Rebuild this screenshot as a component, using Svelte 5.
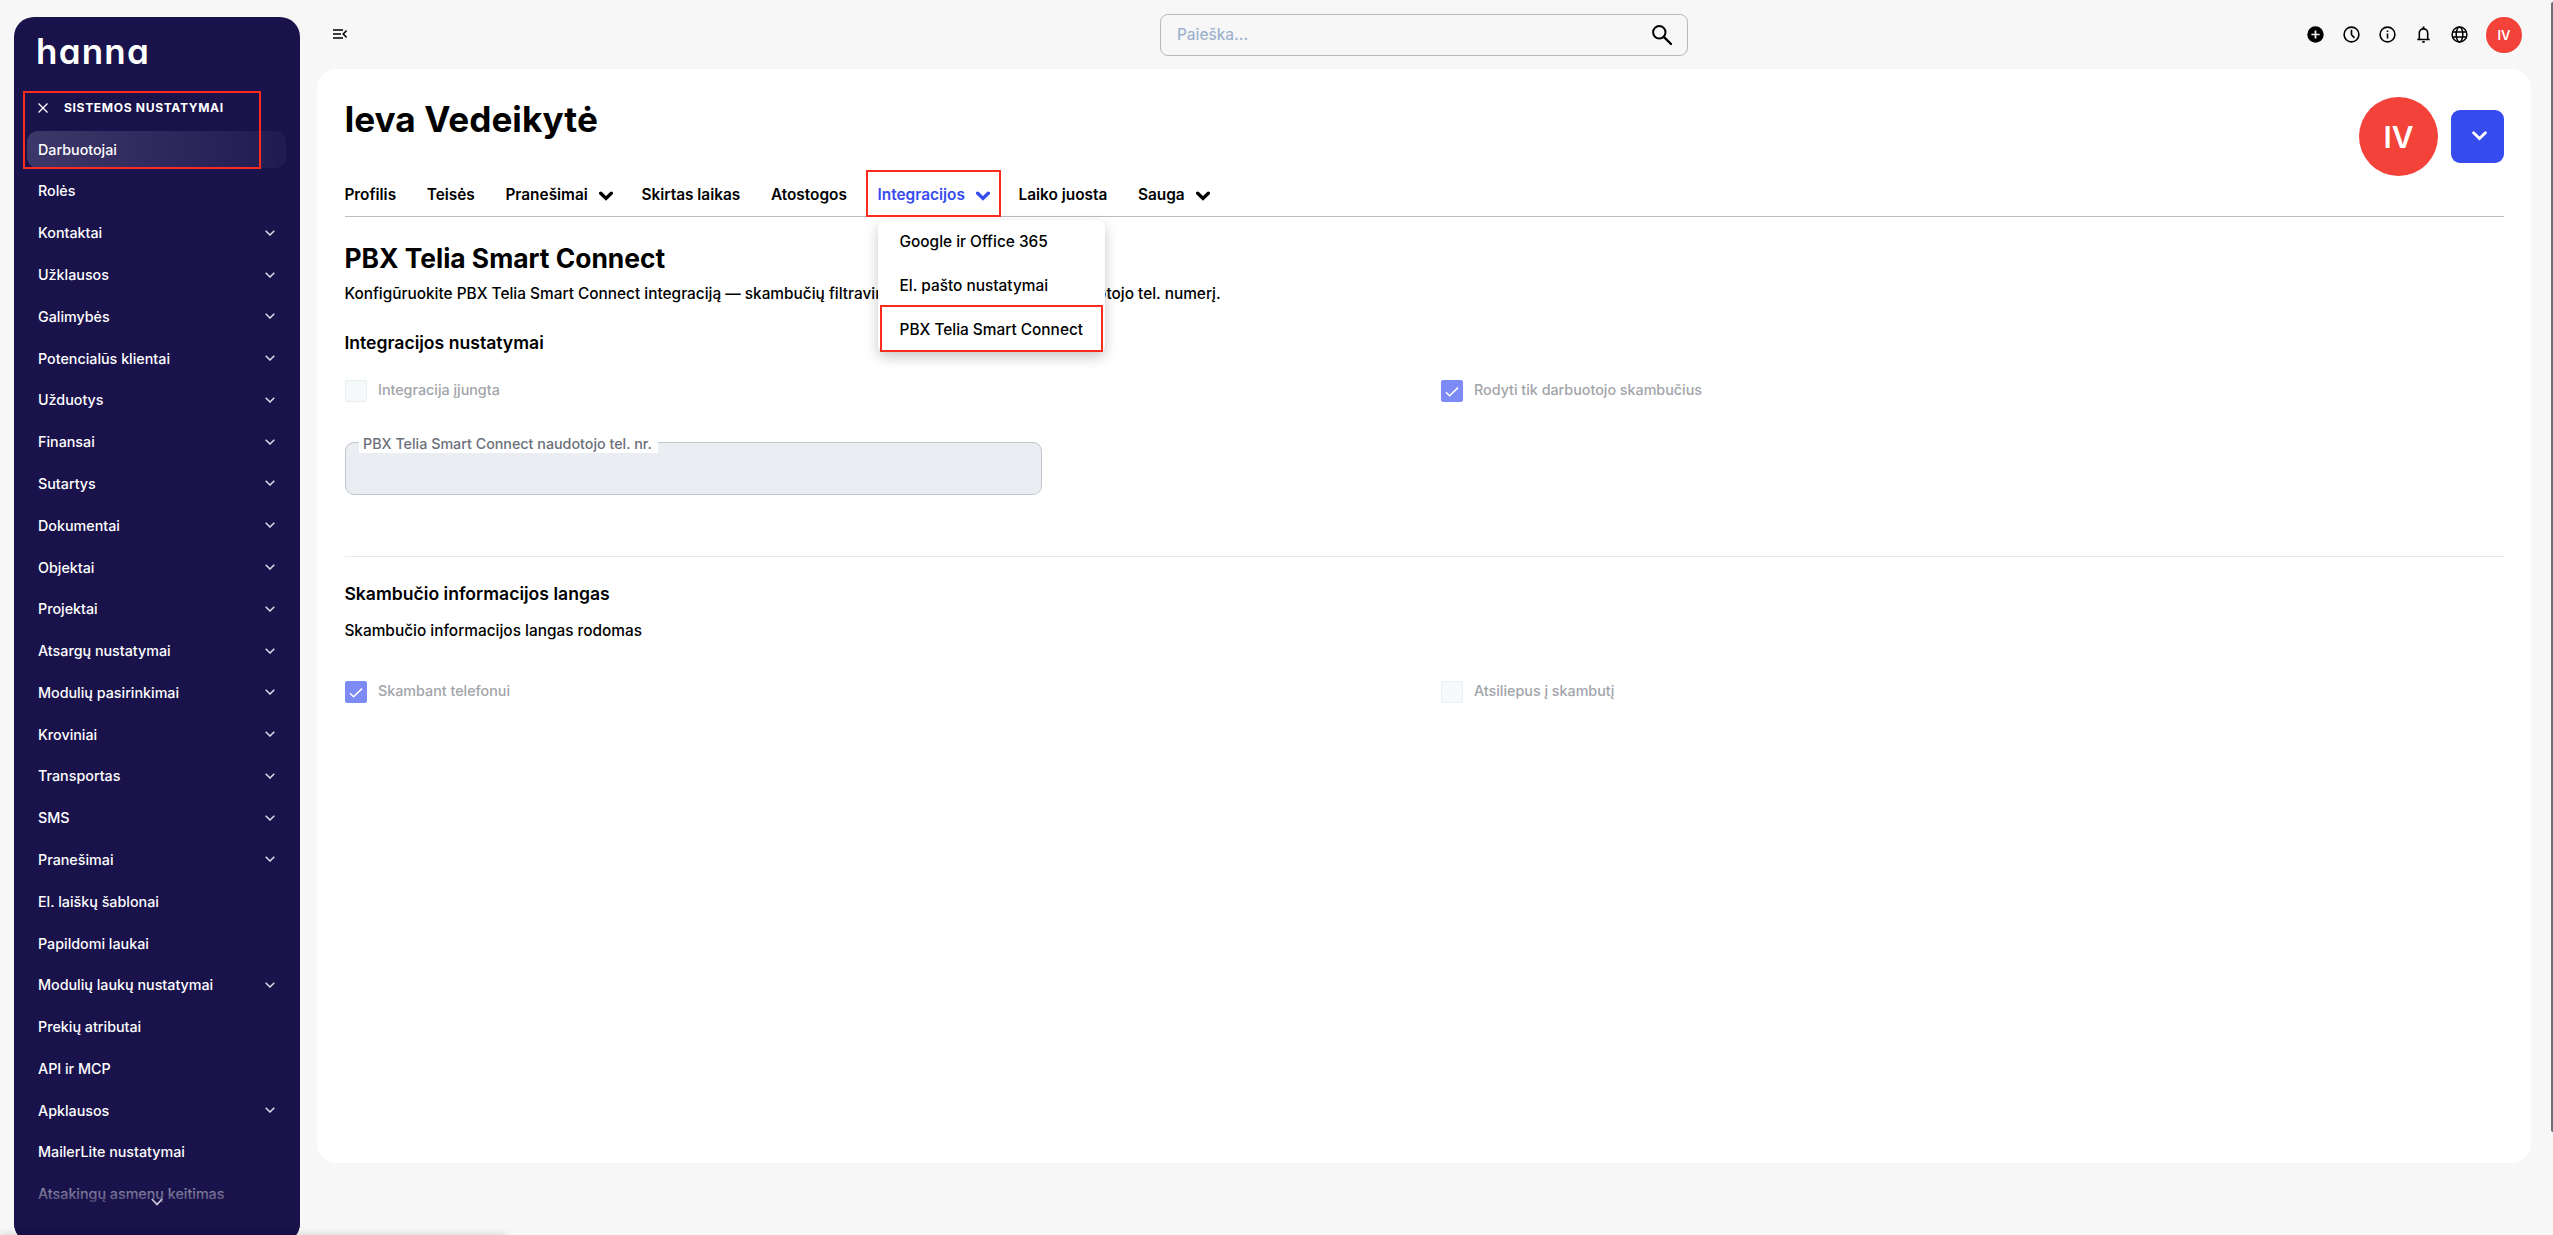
<script>
  const navItems = [
    {label: 'Darbuotojai', active: true},
    {label: 'Rolės'},
    {label: 'Kontaktai', children: true},
    {label: 'Užklausos', children: true},
    {label: 'Galimybės', children: true},
    {label: 'Potencialūs klientai', children: true},
    {label: 'Užduotys', children: true},
    {label: 'Finansai', children: true},
    {label: 'Sutartys', children: true},
    {label: 'Dokumentai', children: true},
    {label: 'Objektai', children: true},
    {label: 'Projektai', children: true},
    {label: 'Atsargų nustatymai', children: true},
    {label: 'Modulių pasirinkimai', children: true},
    {label: 'Kroviniai', children: true},
    {label: 'Transportas', children: true},
    {label: 'SMS', children: true},
    {label: 'Pranešimai', children: true},
    {label: 'El. laiškų šablonai'},
    {label: 'Papildomi laukai'},
    {label: 'Modulių laukų nustatymai', children: true},
    {label: 'Prekių atributai'},
    {label: 'API ir MCP'},
    {label: 'Apklausos', children: true},
    {label: 'MailerLite nustatymai'},
    {label: 'Atsakingų asmenų keitimas'}
  ];

  const tabs = [
    {label: 'Profilis'},
    {label: 'Teisės'},
    {label: 'Pranešimai', children: true},
    {label: 'Skirtas laikas'},
    {label: 'Atostogos'},
    {label: 'Integracijos', children: true, active: true},
    {label: 'Laiko juosta'},
    {label: 'Sauga', children: true}
  ];

  const menuItems = [
    {label: 'Google ir Office 365'},
    {label: 'El. pašto nustatymai'},
    {label: 'PBX Telia Smart Connect', marked: true}
  ];
</script>

{#snippet checkbox(label, checked)}
  <div class="check">
    <span class="box" class:checked>
      {#if checked}
        <svg width="22" height="22" viewBox="0 0 22 22">
          <path d="M5 12.2l3.6 3.6L17 7.6" fill="none" stroke="#fff" stroke-width="1.5" />
        </svg>
      {/if}
    </span>
    <span>{label}</span>
  </div>
{/snippet}

<div class="page">
  <aside>
    <div class="logo">hanna</div>

    <div class="section">
      <svg width="10" height="10" viewBox="0 0 10 10">
        <path d="M.5.5l9 9M9.5.5l-9 9" stroke="#fff" stroke-width="1.3" />
      </svg>
      <span>SISTEMOS NUSTATYMAI</span>
      <div class="marker section-marker"></div>
    </div>

    <nav>
      {#each navItems as item}
        <div class="nav-item" class:active={item.active}>
          <span>{item.label}</span>
          {#if item.children}
            <svg width="10" height="6" viewBox="0 0 10 6">
              <path d="M.7.7L5 5 9.3.7" fill="none" stroke="#dddce8" stroke-width="1.5" />
            </svg>
          {/if}
        </div>
      {/each}
    </nav>

    <div class="fade">
      <svg width="12" height="8" viewBox="0 0 12 8">
        <path d="M.8 1L6 6.4 11.2 1" fill="none" stroke="#c9c7d8" stroke-width="1.7" />
      </svg>
    </div>
  </aside>

  <div class="content">
    <header>
      <svg class="collapse" width="14" height="10" viewBox="0 0 14 10">
        <path d="M0 .9h10M0 5h8M0 9.1h10M13.6 1.6L10.2 5l3.4 3.4" fill="none" stroke="#000" stroke-width="1.5" />
      </svg>

      <div class="search">
        <span>Paieška...</span>
        <svg width="20" height="20" viewBox="0 0 20 20">
          <circle cx="7.3" cy="7.3" r="6.2" fill="none" stroke="#000" stroke-width="2" />
          <path d="M11.8 11.8l7.2 7.2" stroke="#000" stroke-width="2.4" stroke-linecap="round" />
        </svg>
      </div>

      <div class="tools">
        <svg width="17" height="17" viewBox="0 0 17 17">
          <circle cx="8.5" cy="8.5" r="8.2" />
          <path d="M8.5 4.4v8.2M4.4 8.5h8.2" stroke="#f7f7f7" stroke-width="1.7" />
        </svg>
        <svg width="17" height="17" viewBox="0 0 17 17">
          <circle cx="8.5" cy="8.5" r="7.4" fill="none" stroke="#000" stroke-width="1.6" />
          <path d="M8.5 3.8v4.9l3 3.2" fill="none" stroke="#000" stroke-width="1.6" />
        </svg>
        <svg width="17" height="17" viewBox="0 0 17 17">
          <circle cx="8.5" cy="8.5" r="7.4" fill="none" stroke="#000" stroke-width="1.6" />
          <path d="M8.5 7.4v5.2M8.5 4.5v1.6" stroke="#000" stroke-width="1.6" />
        </svg>
        <svg width="17" height="17" viewBox="0 0 17 17">
          <path d="M2.3 13.5h12.4M4.3 13.2V7.1a4.2 4.2 0 0 1 8.4 0v6.1" fill="none" stroke="#000" stroke-width="1.6" />
          <path d="M8.5.6v2.2M7.3 15.8h2.4" stroke="#000" stroke-width="1.8" />
        </svg>
        <svg width="17" height="17" viewBox="0 0 17 17">
          <g fill="none" stroke="#000" stroke-width="1.5">
            <circle cx="8.5" cy="8.5" r="7.4" />
            <ellipse cx="8.5" cy="8.5" rx="3.3" ry="7.4" />
            <path d="M1.4 6h14.2M1.4 11h14.2" />
          </g>
        </svg>
        <div class="avatar small">IV</div>
      </div>
    </header>

    <main>
      <div class="title">
        <h1>Ieva Vedeikytė</h1>
        <div class="avatar">IV</div>
        <button aria-label="Veiksmai">
          <svg width="15" height="10" viewBox="0 0 15 10">
            <path d="M1.6 1.7l5.9 5.8 5.9-5.8" fill="none" stroke="#fff" stroke-width="2.8" stroke-linecap="round" />
          </svg>
        </button>
      </div>

      <div class="tabs">
        {#each tabs as tab}
          <div class="tab" class:active={tab.active}>
            <span>{tab.label}</span>
            {#if tab.children}
              <svg width="14" height="10" viewBox="0 0 14 10">
                <path d="M1.7 2.2L7 7.4l5.3-5.2" fill="none" stroke="currentColor" stroke-width="3.4" stroke-linecap="round" />
              </svg>
            {/if}
            {#if tab.active}
              <div class="menu">
                {#each menuItems as item}
                  <div class="menu-item">
                    {item.label}
                    {#if item.marked}<div class="marker menu-marker"></div>{/if}
                  </div>
                {/each}
              </div>
              <div class="marker tab-marker"></div>
            {/if}
          </div>
        {/each}
      </div>

      <h2>PBX Telia Smart Connect</h2>
      <p class="lead">Konfigūruokite PBX Telia Smart Connect integraciją — skambučių filtravimą ir įrašų rodymą pagal naudotojo tel. numerį.</p>

      <h3>Integracijos nustatymai</h3>
      <div class="checks">
        {@render checkbox('Integracija įjungta', false)}
        {@render checkbox('Rodyti tik darbuotojo skambučius', true)}
      </div>

      <div class="field">
        <label for="phone">PBX Telia Smart Connect naudotojo tel. nr.</label>
        <input id="phone" disabled />
      </div>

      <hr />

      <h3>Skambučio informacijos langas</h3>
      <p class="sub">Skambučio informacijos langas rodomas</p>
      <div class="checks last">
        {@render checkbox('Skambant telefonui', true)}
        {@render checkbox('Atsiliepus į skambutį', false)}
      </div>
    </main>
  </div>

  <div class="scrollbar"></div>
  <div class="status"></div>
</div>

<style>
  :global(body) {
    background: #f7f7f7;
    overflow: hidden;
  }

  .page {
    box-sizing: border-box;
    color: #000;
    display: flex;
    font-family: Inter, sans-serif;
    font-size: 15.4px;
    font-weight: 500;
    gap: 17px;
    height: 1235px;
    overflow: hidden;
    padding: 0 22px 0 14px;
    position: relative;
  }

  svg {
    display: block;
    flex: none;
  }

  aside {
    background: #19124b;
    border-radius: 20px;
    box-sizing: border-box;
    color: #fff;
    flex: none;
    height: 1226px;
    margin-top: 17px;
    overflow: hidden;
    padding: 13px 14px 0 13px;
    position: relative;
    width: 286px;
  }

  .logo {
    font-feature-settings: "cv11";
    font-size: 35px;
    font-weight: 600;
    height: 44px;
    letter-spacing: 1.2px;
    line-height: 43px;
    padding-left: 9px;
  }

  .section {
    align-items: center;
    display: flex;
    font-size: 12.1px;
    font-weight: 700;
    gap: 16px;
    height: 20px;
    letter-spacing: 0.64px;
    line-height: 20px;
    margin-top: 23px;
    padding-left: 11px;
    padding-top: 1px;
    position: relative;
  }

  .marker {
    border: 2px solid #fb2c1d;
    box-sizing: border-box;
    pointer-events: none;
    position: absolute;
    z-index: 3;
  }

  .section-marker {
    height: 78px;
    left: -4px;
    top: -6px;
    width: 238px;
  }

  nav {
    display: flex;
    flex-direction: column;
    gap: 4.4px;
    margin-top: 12.5px;
  }

  .nav-item {
    align-items: center;
    border-radius: 11px;
    box-sizing: border-box;
    display: flex;
    flex: none;
    font-size: 14.3px;
    height: 37.4px;
    justify-content: space-between;
    padding: 0 11px;
  }

  .nav-item.active {
    background: linear-gradient(90deg, #3e3769, #221b52);
  }

  .fade {
    background: linear-gradient(rgba(25, 18, 75, 0), #19124b 62%);
    bottom: 0;
    box-sizing: border-box;
    display: flex;
    height: 78px;
    justify-content: center;
    left: 0;
    padding-top: 33px;
    position: absolute;
    width: 286px;
  }

  .content {
    flex: 1;
  }

  header {
    align-items: center;
    box-sizing: border-box;
    display: flex;
    height: 69px;
    padding: 0 9px 0 16px;
  }

  .collapse {
    margin: 0 813px 1px 0;
  }

  .search {
    align-items: center;
    border: 1px solid #b9b9b9;
    border-radius: 8px;
    box-sizing: border-box;
    color: #9db2ce;
    display: flex;
    height: 42px;
    justify-content: space-between;
    padding: 0 15px 0 16px;
    width: 528px;
  }

  .tools {
    align-items: center;
    display: flex;
    gap: 19.2px;
    margin-left: auto;
  }

  .tools svg {
    margin-bottom: 1px;
  }

  .avatar {
    align-items: center;
    background: #f2423a;
    border-radius: 50%;
    color: #fff;
    display: flex;
    flex: none;
    font-size: 30px;
    font-weight: 600;
    height: 79px;
    justify-content: center;
    width: 79px;
  }

  .avatar.small {
    font-size: 13px;
    height: 36px;
    margin-left: -1.5px;
    width: 36px;
  }

  main {
    background: #fff;
    border-radius: 20px;
    box-sizing: border-box;
    height: 1094px;
    padding: 28px 27px 0 28px;
  }

  .title {
    align-items: center;
    display: flex;
    height: 79px;
  }

  h1, h2, h3, p {
    margin: 0;
    text-indent: -0.6px;
  }

  h1 {
    align-self: flex-start;
    flex: 1;
    font-size: 35.2px;
    font-weight: 700;
    line-height: 44px;
  }

  button {
    align-items: center;
    background: #364bee;
    border: 0;
    border-radius: 9px;
    display: flex;
    height: 53px;
    justify-content: center;
    margin-left: 13px;
    padding: 0 0 2px 3px;
    width: 53px;
  }

  .tabs {
    border-bottom: 1px solid #bcbcbc;
    display: flex;
    font-weight: 600;
    gap: 31.2px;
    height: 40px;
    text-indent: -0.6px;
  }

  .tab {
    align-items: center;
    display: flex;
    gap: 11px;
    height: 37px;
    position: relative;
  }

  .tab svg {
    margin: 2px -2px 0 0;
  }

  .tab.active {
    color: #364bee;
  }

  .tab-marker {
    height: 47px;
    left: -12px;
    top: -6px;
    width: 135px;
  }

  .menu {
    background: #fff;
    border-radius: 7px;
    box-shadow: 0 5px 13px rgba(0, 0, 0, 0.22);
    color: #000;
    font-weight: 500;
    height: 132px;
    left: 0;
    position: absolute;
    top: 44px;
    width: 227px;
    z-index: 2;
  }

  .menu-item {
    height: 44px;
    line-height: 44px;
    padding-left: 22px;
    position: relative;
    white-space: nowrap;
  }

  .menu-marker {
    height: 47px;
    left: 2px;
    top: -3px;
    width: 223px;
  }

  h2 {
    font-size: 26.4px;
    font-weight: 700;
    line-height: 32px;
    margin-top: 25px;
  }

  .lead {
    line-height: 24px;
    margin-top: 8px;
  }

  h3 {
    font-size: 17.6px;
    font-weight: 600;
    line-height: 24px;
    margin-top: 25px;
  }

  .checks {
    display: grid;
    grid-template-columns: 1096px 1fr;
    margin-top: 25px;
  }

  .checks.last {
    margin-top: 38px;
  }

  .check {
    color: #a2a4aa;
    display: flex;
    font-size: 14.3px;
    gap: 11px;
    height: 22px;
    line-height: 20px;
  }

  .box {
    background: #f5f9fa;
    border: 1px solid #e9eff1;
    border-radius: 2px;
    box-sizing: border-box;
    height: 22px;
    width: 22px;
  }

  .box.checked {
    background: #7d8bf6;
    border: 0;
  }

  .field {
    height: 53px;
    margin-top: 40px;
    position: relative;
    width: 697px;
  }

  .field label {
    background: #fff;
    color: #6c707a;
    font-size: 14.3px;
    left: 14px;
    line-height: 18px;
    padding: 0 6px 0 4px;
    position: absolute;
    top: -7px;
  }

  input {
    background: #eaedf2;
    border: 1px solid #c3c7cc;
    border-radius: 9px;
    box-sizing: border-box;
    display: block;
    height: 53px;
    width: 100%;
  }

  hr {
    border: 0;
    border-top: 1px solid #e8e8e8;
    margin: 61px 0 0;
  }

  .sub {
    line-height: 24px;
    margin-top: 13px;
  }

  .scrollbar {
    background: #6b7078;
    border-radius: 2px 0 0 2px;
    height: 1130px;
    position: absolute;
    right: 0;
    top: 2px;
    width: 2px;
  }

  .status {
    bottom: -6px;
    box-shadow: 0 0 8px rgba(0, 0, 0, 0.25);
    height: 5px;
    left: 0;
    position: absolute;
    width: 506px;
  }
</style>
